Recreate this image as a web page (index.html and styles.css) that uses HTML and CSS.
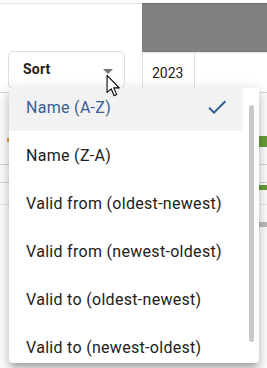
FILE: index.html
```html
<!DOCTYPE html>
<html lang="en">
<head>
  <meta charset="UTF-8" />
  <meta name="viewport" content="width=device-width, initial-scale=1.0"/>
  <title>Sort menu</title>
  <link rel="stylesheet" href="styles.css">
</head>
<body>
  <div class="page">
    <div class="head">
      <div class="head-left"></div>
      <div class="head-right"></div>
    </div>

    <div class="toolbar">
      <div class="sort-cell">
        <button class="sort">Sort <span class="caret"></span></button>
      </div>
      <div class="year">2023</div>
      <div class="year-rest"></div>
    </div>

    <div class="chart">
      <div class="gridline" style="top: 3px;"></div>
      <div class="gridline" style="top: 75px;"></div>
      <div class="gridline" style="top: 93px;"></div>
      <div class="gridline light" style="top: 115px;"></div>
      <div class="tick" style="top: 49px;"></div>
      <div class="bar green" style="top: 47px; height: 11px;"></div>
      <div class="bar green" style="top: 96px; height: 5px;"></div>
      <div class="bar grey" style="top: 133px; height: 5px;"></div>
    </div>

    <div class="menu">
      <div class="options">
        <ul>
          <li class="selected">
            <span>Name (A-Z)</span>
            <svg class="check" viewBox="0 0 24 24" width="24" height="24"><path d="M9 16.17L4.83 12l-1.42 1.41L9 19 21 7l-1.41-1.41z"/></svg>
          </li>
          <li><span>Name (Z-A)</span></li>
          <li><span>Valid from (oldest-newest)</span></li>
          <li><span>Valid from (newest-oldest)</span></li>
          <li><span>Valid to (oldest-newest)</span></li>
          <li><span>Valid to (newest-oldest)</span></li>
        </ul>
      </div>
      <div class="track"><div class="thumb"></div></div>
    </div>

    <svg class="cursor" viewBox="-1 -1 14 21" width="15" height="23">
      <path d="M0 0 L0 16 L3.8 12.6 L6.6 19 L9 18 L6.3 11.7 L11.4 11.7 Z" fill="#fff" stroke="#000" stroke-width="1" stroke-linejoin="round"/>
    </svg>
  </div>
</body>
</html>
```

FILE: styles.css
```css
body {
  margin: 0;
  font-family: Roboto, "Liberation Sans", Arial, sans-serif;
  background: #fff;
  color: #212121;
}
.page {
  position: relative;
  width: 267px;
  height: 368px;
  overflow: hidden;
}
.head {
  display: flex;
  margin-top: 3px;
  height: 49px;
}
.head-left {
  width: 142px;
  border-top: 1px solid #e3e3e3;
}
.head-right {
  flex: 1;
  background: #808080;
  border-top: 1px solid #6a6a6a;
}
.toolbar {
  display: flex;
  height: 37px;
}
.sort-cell {
  width: 142px;
}
.sort {
  display: flex;
  align-items: center;
  box-sizing: border-box;
  width: 117px;
  height: 38px;
  margin: -1px 0 0 8px;
  padding: 0 11px 3px 14px;
  border: 1px solid #dedede;
  border-radius: 5px;
  background: #fff;
  font-family: inherit;
  font-size: 14px;
  font-weight: 700;
  letter-spacing: 0.2px;
  color: #222;
}
.caret {
  margin-left: auto;
  margin-top: 5px;
  width: 0;
  height: 0;
  border-left: 5px solid transparent;
  border-right: 5px solid transparent;
  border-top: 5px solid #757575;
}
.year {
  box-sizing: border-box;
  width: 52px;
  padding: 12px 0 0 9px;
  border-left: 1px solid #e0e0e0;
  border-top: 1px solid #e0e0e0;
  font-size: 14px;
  line-height: 16px;
}
.year-rest {
  flex: 1;
  border-left: 1px solid #e0e0e0;
  border-top: 1px solid #e0e0e0;
}
.chart {
  position: relative;
  height: 279px;
}
.gridline {
  position: absolute;
  left: 0;
  right: 0;
  height: 1px;
  background: #d6d6d6;
}
.gridline.light { background: #ebebeb; }
.tick {
  position: absolute;
  left: 7px;
  width: 2px;
  height: 4px;
  background: #e6a23c;
}
.bar {
  position: absolute;
  left: 200px;
  right: 0;
}
.bar.green { background: #6a9f3a; }
.bar.grey { background: #bdbdbd; }

.menu {
  position: absolute;
  left: 9px;
  top: 88px;
  width: 250px;
  height: 275px;
  display: flex;
  background: #fff;
  border-radius: 0 0 4px 4px;
  overflow: hidden;
  box-shadow: 0 5px 5px -3px rgba(0, 0, 0, 0.2), 0 8px 10px 1px rgba(0, 0, 0, 0.14), 0 3px 14px 2px rgba(0, 0, 0, 0.12);
}
.options {
  flex: 1;
  overflow: hidden;
}
.options ul {
  list-style: none;
  margin: -5px 0 0;
  padding: 0;
}
.options li {
  display: flex;
  align-items: center;
  height: 48px;
  padding: 0 14px 0 17px;
  font-size: 16px;
  letter-spacing: 0.3px;
  color: #212121;
}
.options li.selected {
  background: #f2f2f2;
  color: #355d97;
}
.check {
  margin-left: auto;
  fill: #355d97;
}
.track {
  width: 16px;
}
.thumb {
  width: 5px;
  height: 237px;
  margin: 17px 0 0 6px;
  border-radius: 3px;
  background: #c8c8c8;
}
.cursor {
  position: absolute;
  left: 106px;
  top: 74px;
}
```
